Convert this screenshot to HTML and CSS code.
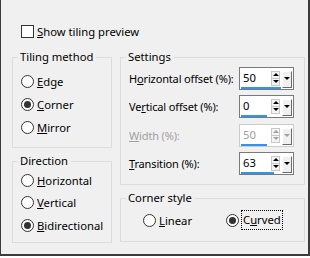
FILE: index.html
```html
<!DOCTYPE html>
<html lang="en">
<head>
<meta charset="UTF-8">
<title>Tile</title>
<link rel="stylesheet" href="styles.css">
</head>
<body>

<div class="dialog">
    <div class="check-row">
        <span class="checkbox"></span>
        <span><u>S</u>how tiling preview</span>
    </div>

    <div class="columns">
        <div class="col-left">
            <fieldset class="group tiling">
                <legend>Tiling method</legend>
                <div class="radio-row"><span class="radio"></span><span><u>E</u>dge</span></div>
                <div class="radio-row"><span class="radio checked"></span><span><u>C</u>orner</span></div>
                <div class="radio-row"><span class="radio"></span><span><u>M</u>irror</span></div>
            </fieldset>
            <fieldset class="group direction">
                <legend>Direction</legend>
                <div class="radio-row"><span class="radio"></span><span><u>H</u>orizontal</span></div>
                <div class="radio-row"><span class="radio"></span><span><u>V</u>ertical</span></div>
                <div class="radio-row"><span class="radio checked"></span><span><u>B</u>idirectional</span></div>
            </fieldset>
        </div>

        <div class="col-right">
            <fieldset class="group settings">
                <legend>Settings</legend>
                <div class="field">
                    <span class="label">H<u>o</u>rizontal offset (%):</span>
                    <div class="spin">
                        <span class="val">50</span>
                        <span class="updown"></span>
                        <span class="drop"></span>
                        <span class="bar" style="width: 40px"></span>
                    </div>
                </div>
                <div class="field">
                    <span class="label">Ve<u>r</u>tical offset (%):</span>
                    <div class="spin">
                        <span class="val">0</span>
                        <span class="updown"></span>
                        <span class="drop"></span>
                        <span class="bar" style="width: 26px"></span>
                    </div>
                </div>
                <div class="field disabled">
                    <span class="label"><u>W</u>idth (%):</span>
                    <div class="spin">
                        <span class="val">50</span>
                        <span class="updown"></span>
                        <span class="drop"></span>
                        <span class="bar" style="width: 26px"></span>
                    </div>
                </div>
                <div class="field">
                    <span class="label"><u>T</u>ransition (%):</span>
                    <div class="spin">
                        <span class="val">63</span>
                        <span class="updown"></span>
                        <span class="drop"></span>
                        <span class="bar" style="width: 33px"></span>
                    </div>
                </div>
            </fieldset>
            <fieldset class="group corner">
                <legend>Corner style</legend>
                <div class="corner-row">
                    <div class="radio-row linear"><span class="radio"></span><span><u>L</u>inear</span></div>
                    <div class="radio-row"><span class="radio checked"></span><span class="focus">C<u>u</u>rved</span></div>
                </div>
            </fieldset>
        </div>
    </div>
</div>

</body>
</html>
```

FILE: styles.css
```css
body {
    margin: 0;
    background-color: #ffffff;
    font-family: "Noto Sans", sans-serif;
    font-size: 11.25px;
    color: #000000;
}
.dialog {
    width: 310px;
    height: 256px;
    box-sizing: border-box;
    background-color: #f0f0f0;
    border-left: 1px solid #3c3c3c;
    border-right: 2px solid #3c3c3c;
    border-bottom: 2px solid #3c3c3c;
    padding-top: 25px;
}
.check-row {
    display: flex;
    align-items: center;
    gap: 3px;
    margin-left: 20px;
    height: 13px;
}
.checkbox {
    width: 11px;
    height: 11px;
    border: 1px solid #333333;
    background-color: #ffffff;
}
.columns {
    display: flex;
    gap: 8px;
    margin-top: 12px;
    margin-left: 11px;
}
.col-left {
    width: 100px;
}
.col-right {
    width: 185px;
}
.group {
    margin: 0;
    min-width: 0;
    border: 1px solid #dcdcdc;
    padding: 0 0 0 8px;
}
.group legend {
    margin-left: -3px;
    padding: 0 3px 0 2px;
    line-height: 14px;
}
.tiling {
    padding-top: 5.5px;
    padding-bottom: 8.5px;
}
.direction {
    margin-top: 6px;
    padding-top: 1px;
    padding-bottom: 5.5px;
}
.tiling .radio-row {
    height: 23px;
}
.direction .radio-row {
    height: 22.5px;
}
.radio-row {
    display: flex;
    align-items: center;
    gap: 3px;
}
.radio {
    width: 11px;
    height: 11px;
    border: 1px solid #333333;
    border-radius: 50%;
    background-color: #ffffff;
    display: flex;
    align-items: center;
    justify-content: center;
    flex: none;
}
.radio.checked::after {
    content: "";
    width: 7px;
    height: 7px;
    border-radius: 50%;
    background-color: #333333;
}
.settings {
    padding-right: 10px;
    padding-bottom: 6px;
}
.field {
    display: flex;
    align-items: center;
    justify-content: space-between;
    height: 28.5px;
}
.label {
    white-space: nowrap;
    font-size: 11px;
    letter-spacing: -0.15px;
}
.field.disabled {
    color: #a0a0a0;
}
.spin {
    position: relative;
    display: flex;
    align-items: flex-start;
    flex: none;
    width: 55px;
    height: 23px;
    box-sizing: border-box;
    border: 1px solid #7a7a7a;
    background-color: #ffffff;
    padding: 2px 0 0 3px;
}
.disabled .spin {
    border-color: #cccccc;
}
.val {
    flex: 1;
    line-height: 16px;
}
.updown {
    width: 9px;
    height: 15px;
    margin-top: 1px;
    box-sizing: border-box;
    border: 1px solid #c8c8c8;
    background:
        linear-gradient(#c8c8c8, #c8c8c8) 0 6px / 100% 1px no-repeat,
        #f4f4f4;
    position: relative;
}
.updown::before,
.updown::after {
    content: "";
    position: absolute;
    left: 1px;
    border-left: 3px solid transparent;
    border-right: 3px solid transparent;
}
.updown::before {
    top: 1px;
    border-bottom: 3px solid #000000;
}
.updown::after {
    bottom: 2px;
    border-top: 3px solid #000000;
}
.drop {
    width: 10px;
    height: 17px;
    margin: 1px 1px 0 2px;
    box-sizing: border-box;
    background-color: #f0f0f0;
    border-top: 1px solid #ffffff;
    border-left: 1px solid #ffffff;
    border-right: 1px solid #696969;
    border-bottom: 1px solid #696969;
    display: flex;
    justify-content: center;
    padding-top: 5px;
}
.drop::after {
    content: "";
    border-left: 3px solid transparent;
    border-right: 3px solid transparent;
    border-top: 3px solid #000000;
    height: 0;
}
.disabled .updown::before {
    border-bottom-color: #a0a0a0;
}
.disabled .updown::after,
.disabled .drop::after {
    border-top-color: #a0a0a0;
}
.bar {
    position: absolute;
    left: 1px;
    bottom: 0;
    height: 2px;
    background-color: #3393e8;
}
.corner {
    margin-top: 6px;
    padding-top: 4px;
    padding-bottom: 10px;
}
.corner-row {
    display: flex;
    height: 22px;
    margin-left: 14px;
}
.corner .linear {
    width: 83px;
}
.focus {
    outline: 1px dotted #000000;
    padding: 2px 1px;
    line-height: 14px;
}
```
